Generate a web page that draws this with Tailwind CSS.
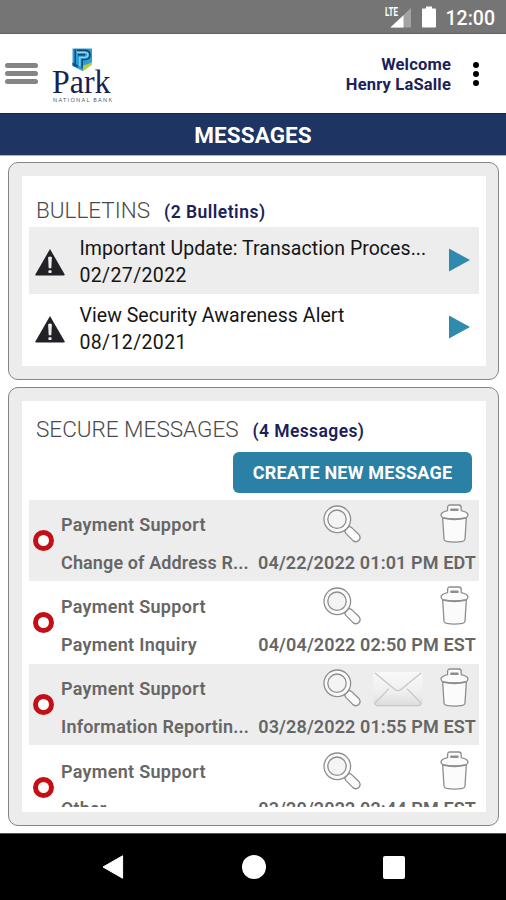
<!DOCTYPE html>
<html lang="en">
<head>
<meta charset="utf-8">
<title>Messages</title>
<script src="https://cdn.jsdelivr.net/npm/@tailwindcss/browser@4"></script>
</head>
<body class="w-[506px] h-[900px] overflow-hidden bg-white font-['Roboto',sans-serif] flex flex-col">
<svg class="absolute size-0">
  <defs>
    <linearGradient id="env" x1="0" y1="0" x2="0" y2="1"><stop offset="0" stop-color="#f9f9f9"/><stop offset=".6" stop-color="#efefef"/><stop offset="1" stop-color="#dcdcdc"/></linearGradient>
    <symbol id="search" viewBox="0 0 38 38">
      <g fill="#fbfbfb" stroke="#8e8e8e" stroke-width="1.3" stroke-linejoin="round">
        <path d="M21.6 26L26 21.4L28.4 22.4L35.6 29.2Q38.4 32.6 36 35.2Q33.4 38 30 35.6L23 28.6Z"/>
        <circle cx="14.3" cy="14.3" r="13.3"/>
        <circle cx="14" cy="14.2" r="9.2" fill="#f4f4f4"/>
      </g>
    </symbol>
    <symbol id="trash" viewBox="0 0 29 39">
      <g fill="#fbfbfb" stroke="#8e8e8e" stroke-width="1.3" stroke-linejoin="round">
        <path d="M2.6 13L4 35Q4.3 37 6.5 37.4Q14.5 38.8 22.5 37.4Q24.7 37 25 35L26.4 13Z"/>
        <path d="M7.6 6.6V3.4Q7.6 1 10 1H18.8Q21.2 1 21.2 3.4V6.6Q27.8 8 28 11Q27.9 13.2 25.6 13.8Q14.5 16 3.4 13.8Q1.1 13.2 1 11Q1.2 8 7.6 6.6Z"/>
        <path d="M3 14Q14.5 16.8 26 14" fill="none" stroke-width="1.7"/>
        <path d="M11 5.2H17.8V6.4H11Z" stroke-width="1.4"/>
      </g>
    </symbol>
    <symbol id="warn" viewBox="0 0 31 29">
      <path d="M15 1L29.6 26.3Q30 27.6 28.6 27.6H1.4Q0 27.6 .5 26.3Z" fill="#202225"/>
      <path d="M13.1 9.2Q15 7.8 16.9 9.2L16.3 20.2H13.7Z" fill="#eee"/>
      <rect x="13.4" y="22.2" width="3.2" height="2.8" rx=".8" fill="#eee"/>
    </symbol>
    <symbol id="mail" viewBox="0 0 50 36">
      <path d="M.5 1H49.5V32L46 35H4L.5 32Z" fill="url(#env)"/>
      <path d="M1.5 32.6L4 34.6H46L48.5 32.6" stroke="#c6c6c6" stroke-width="1.2" fill="none"/>
      <path d="M1.6 1.8L22 18.4Q25 20.8 28 18.4L48.4 1.8M1.8 32.4L16 17.6M48.2 32.4L34 17.6" stroke="#c6c6c6" stroke-width="1.3" fill="none"/>
    </symbol>
  </defs>
</svg>

<header class="shrink-0">
  <div class="h-[34px] bg-[#757575] border-b border-[#626262] flex justify-end items-start pr-[11px] text-white">
    <svg class="w-[27px] h-[22px] mt-[6px]" viewBox="0 0 27 22">
      <path d="M26 2V21.5H5.4Z" fill="#a3a3a3"/><path d="M18.5 9.2V21.5H5.4Z" fill="#fff"/>
      <text x="0" y="10.2" font-family="Roboto" font-size="12.5" font-weight="700" textLength="13" lengthAdjust="spacingAndGlyphs" fill="#fff">LTE</text>
    </svg>
    <svg class="w-[14px] h-[22px] mt-[6px] ml-[10px]" viewBox="0 0 14 22"><path d="M4 .5H10V2.5H13Q14 2.5 14 3.5V20.5Q14 21.5 13 21.5H1Q0 21.5 0 20.5V3.5Q0 2.5 1 2.5H4Z" fill="#fff"/></svg>
    <span class="ml-[10px] mt-[7px] text-[19.5px] leading-6 font-medium">12:00</span>
  </div>
  <div class="h-[79px] flex">
    <div class="mt-[28.5px] ml-[5px] w-[33px] flex flex-col gap-[3px]">
      <i class="h-[5px] rounded-full bg-[#858585]"></i><i class="h-[5px] rounded-full bg-[#858585]"></i><i class="h-[5px] rounded-full bg-[#858585]"></i>
    </div>
    <svg class="ml-[14px] mt-[13px] w-[62px] h-[57px]" viewBox="0 0 62 57">
      <path d="M20.5 1.5H40V16.5L30.5 24L20.5 19Z" fill="#2a9fd0"/>
      <path d="M20.5 15.5L26 18.2V20.8L20.5 18.6Z" fill="#1b4d83"/>
      <path d="M23.2 2V17.6M25 3.2H33.5Q38 3.6 38 8Q38 12.2 33.5 12.6H30.2V21.5" fill="none" stroke="#173f78" stroke-width="1.4"/>
      <path d="M26 7.8H33" fill="none" stroke="#173f78" stroke-width="1.6"/>
      <path d="M24.8 5.4H33.4Q36 5.8 36 8Q36 10 33.4 10.3H27.8V19" fill="none" stroke="#8ad8ee" stroke-width="1.3"/>
      <path d="M31 18.5Q36.5 17.8 40 14.8V17.8L30.8 24.4Z" fill="#bccb3a"/>
      <text x="0" y="45.5" font-family="Liberation Serif" font-size="33" textLength="58.5" lengthAdjust="spacingAndGlyphs" fill="#171f55">Park</text>
      <text x="1" y="54.6" font-family="Lato" font-size="5.4" textLength="59" lengthAdjust="spacing" fill="#55586c">NATIONAL BANK</text>
    </svg>
    <div class="ml-auto mt-[20.5px] text-right text-[16.5px] leading-5 font-bold text-[#1b2159] tracking-[0.18px]">Welcome<br>Henry LaSalle</div>
    <div class="ml-[22px] mr-[27px] mt-[28px] flex flex-col gap-[3px]">
      <i class="size-[6px] rounded-full bg-black"></i><i class="size-[6px] rounded-full bg-black"></i><i class="size-[6px] rounded-full bg-black"></i>
    </div>
  </div>
  <h1 class="h-[42px] bg-[#1e3463] border-t border-[#152455] text-center text-white text-[22.5px] leading-[42px] font-bold tracking-[0.1px]">MESSAGES</h1>
  <div class="h-px bg-[#b3b0d8]"></div>
</header>

<main class="flex-1 pt-[6px] pl-[8px] pr-[7px] flex flex-col gap-[7px] min-h-0">
  <section class="h-[218px] shrink-0 rounded-[10px] border-[1.5px] border-[#858585] bg-[#ececec] p-[13px] pr-[12px]">
    <div class="h-full bg-white px-[7px]">
      <div class="h-[51px] pl-[7px] flex items-baseline pt-[20px] leading-7">
        <h2 class="text-[22.5px] leading-7 font-light text-[#4a4a4a]">BULLETINS</h2>
        <span class="ml-[14px] text-[17.5px] font-semibold text-[#1b2159] tracking-[0.48px]">(2 Bulletins)</span>
      </div>
      <div class="h-[67px] bg-[#ededed] flex text-[19.5px] leading-[26.5px] text-[#151515] tracking-[0.05px]">
        <svg class="w-[31px] h-[29px] ml-[6px] mt-[21px]"><use href="#warn"/></svg>
        <p class="ml-[13.5px] mt-[9px] whitespace-nowrap">Important Update: Transaction Proces...<br><span class="tracking-[0.35px]">02/27/2022</span></p>
        <svg class="ml-auto mr-[9px] mt-[21px] w-[21px] h-[24px]" viewBox="0 0 21 24"><path d="M0 .5L21 12L0 23.5Z" fill="#2e8bad"/></svg>
      </div>
      <div class="h-[67px] flex text-[19.5px] leading-[26.5px] text-[#151515] tracking-[0.05px]">
        <svg class="w-[31px] h-[29px] ml-[6px] mt-[21px]"><use href="#warn"/></svg>
        <p class="ml-[13.5px] mt-[9px] whitespace-nowrap">View Security Awareness Alert<br><span class="tracking-[0.35px]">08/12/2021</span></p>
        <svg class="ml-auto mr-[9px] mt-[21px] w-[21px] h-[24px]" viewBox="0 0 21 24"><path d="M0 .5L21 12L0 23.5Z" fill="#2e8bad"/></svg>
      </div>
    </div>
  </section>

  <section class="h-[439px] shrink-0 rounded-[10px] border-[1.5px] border-[#858585] bg-[#ececec] p-[13px] pr-[12px]">
    <div class="h-full bg-white px-[7px] flex flex-col">
      <div class="h-[51px] shrink-0 pl-[7px] flex items-baseline pt-[14px] leading-7">
        <h2 class="text-[22.5px] leading-7 font-light text-[#4a4a4a]">SECURE MESSAGES</h2>
        <span class="ml-[14px] text-[17.5px] font-semibold text-[#1b2159] tracking-[0.4px]">(4 Messages)</span>
      </div>
      <button class="self-end mr-[7px] shrink-0 w-[239px] h-[41px] rounded-[6px] bg-[#2b80a5] text-white text-[18px] font-bold whitespace-nowrap tracking-[0.22px]">CREATE NEW MESSAGE</button>
      <ul class="mt-[7px] h-[307px] overflow-hidden text-[18px] font-semibold text-[#666] tracking-[0.3px]">
        <li class="h-[82.2px] flex">
          <div class="h-[81px] w-full bg-[#ededed] flex">
            <i class="size-[21px] mt-[30px] ml-[4px] rounded-full border-[5.5px] border-[#c50f16] bg-white shrink-0"></i>
            <div class="flex-1 ml-[7px] mr-[3px] flex flex-col">
              <div class="h-[48px] flex"><span class="mt-[13px] leading-6">Payment Support</span><svg class="ml-auto mt-[5px] w-[38px] h-[38px]"><use href="#search"/></svg><svg class="ml-[79px] mr-[7px] mt-[4px] w-[29px] h-[39px]"><use href="#trash"/></svg></div>
              <div class="flex justify-between leading-6 mt-[2.5px] whitespace-nowrap tracking-[0.12px]"><span>Change of Address R...</span><span>04/22/2022 01:01 PM EDT</span></div>
            </div>
          </div>
        </li>
        <li class="h-[82.2px] flex">
          <div class="h-[81px] w-full flex">
            <i class="size-[21px] mt-[30px] ml-[4px] rounded-full border-[5.5px] border-[#c50f16] bg-white shrink-0"></i>
            <div class="flex-1 ml-[7px] mr-[3px] flex flex-col">
              <div class="h-[48px] flex"><span class="mt-[13px] leading-6">Payment Support</span><svg class="ml-auto mt-[5px] w-[38px] h-[38px]"><use href="#search"/></svg><svg class="ml-[79px] mr-[7px] mt-[4px] w-[29px] h-[39px]"><use href="#trash"/></svg></div>
              <div class="flex justify-between leading-6 mt-[2.5px] whitespace-nowrap tracking-[0.12px]"><span class="tracking-[0.3px]">Payment Inquiry</span><span>04/04/2022 02:50 PM EST</span></div>
            </div>
          </div>
        </li>
        <li class="h-[82.2px] flex">
          <div class="h-[81px] w-full bg-[#ededed] flex">
            <i class="size-[21px] mt-[30px] ml-[4px] rounded-full border-[5.5px] border-[#c50f16] bg-white shrink-0"></i>
            <div class="flex-1 ml-[7px] mr-[3px] flex flex-col">
              <div class="h-[48px] flex"><span class="mt-[13px] leading-6">Payment Support</span><svg class="ml-auto mt-[5px] w-[38px] h-[38px]"><use href="#search"/></svg><svg class="ml-[12px] mt-[7px] w-[50px] h-[36px]"><use href="#mail"/></svg><svg class="ml-[17px] mr-[7px] mt-[4px] w-[29px] h-[39px]"><use href="#trash"/></svg></div>
              <div class="flex justify-between leading-6 mt-[2.5px] whitespace-nowrap tracking-[0.12px]"><span class="tracking-[0.2px]">Information Reportin...</span><span>03/28/2022 01:55 PM EST</span></div>
            </div>
          </div>
        </li>
        <li class="h-[82.2px] flex">
          <div class="h-[81px] w-full flex">
            <i class="size-[21px] mt-[30px] ml-[4px] rounded-full border-[5.5px] border-[#c50f16] bg-white shrink-0"></i>
            <div class="flex-1 ml-[7px] mr-[3px] flex flex-col">
              <div class="h-[48px] flex"><span class="mt-[13px] leading-6">Payment Support</span><svg class="ml-auto mt-[5px] w-[38px] h-[38px]"><use href="#search"/></svg><svg class="ml-[79px] mr-[7px] mt-[4px] w-[29px] h-[39px]"><use href="#trash"/></svg></div>
              <div class="flex justify-between leading-6 mt-[2.5px] whitespace-nowrap tracking-[0.12px]"><span>Other</span><span>03/20/2022 02:44 PM EST</span></div>
            </div>
          </div>
        </li>
      </ul>
    </div>
  </section>
</main>

<nav class="h-[67px] shrink-0 bg-black border-t border-[#555] flex items-center justify-between pl-[102px] pr-[101px]">
  <svg class="w-[22px] h-6" viewBox="0 0 22 24"><path d="M20.6 .8V23.2L1 12Z" fill="#fff" stroke="#fff" stroke-linejoin="round"/></svg>
  <i class="size-[24px] rounded-full bg-white"></i>
  <i class="w-[22px] h-[23px] rounded-[2px] bg-white"></i>
</nav>
</body>
</html>
